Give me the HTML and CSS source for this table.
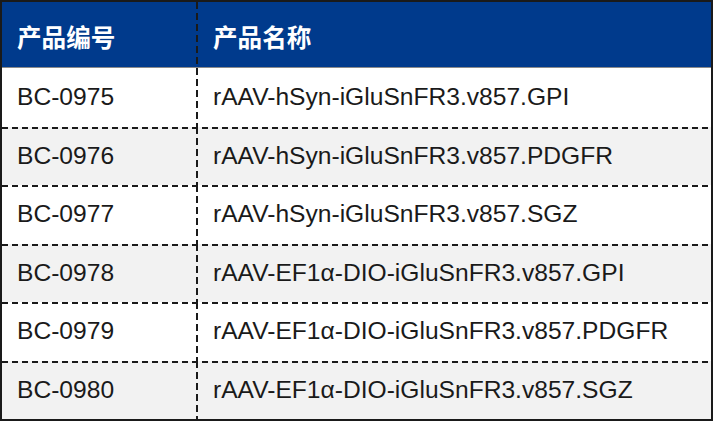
FILE: index.html
```html
<!DOCTYPE html>
<html lang="zh">
<head>
<meta charset="utf-8">
<link rel="stylesheet" href="styles.css">
</head>
<body>
<div class="table">
  <div class="row head">
    <div class="cell c1">产品编号</div>
    <div class="cell c2">产品名称</div>
  </div>
  <div class="row">
    <div class="cell c1">BC-0975</div>
    <div class="cell c2">rAAV-hSyn-iGluSnFR3.v857.GPI</div>
  </div>
  <div class="row alt">
    <div class="cell c1">BC-0976</div>
    <div class="cell c2">rAAV-hSyn-iGluSnFR3.v857.PDGFR</div>
  </div>
  <div class="row">
    <div class="cell c1">BC-0977</div>
    <div class="cell c2">rAAV-hSyn-iGluSnFR3.v857.SGZ</div>
  </div>
  <div class="row alt">
    <div class="cell c1">BC-0978</div>
    <div class="cell c2">rAAV-EF1α-DIO-iGluSnFR3.v857.GPI</div>
  </div>
  <div class="row">
    <div class="cell c1">BC-0979</div>
    <div class="cell c2">rAAV-EF1α-DIO-iGluSnFR3.v857.PDGFR</div>
  </div>
  <div class="row alt">
    <div class="cell c1">BC-0980</div>
    <div class="cell c2">rAAV-EF1α-DIO-iGluSnFR3.v857.SGZ</div>
  </div>
</div>
</body>
</html>
```
FILE: styles.css
```css
html, body {
  margin: 0;
  padding: 0;
  background: #ffffff;
}
.table {
  box-sizing: border-box;
  width: 713px;
  height: 421px;
  border: 2px solid #1a1a1a;
  display: grid;
  grid-template-rows: 66px repeat(6, 1fr);
  font-family: "Liberation Sans", Arial, "Noto Sans CJK SC", sans-serif;
  font-size: 24.6px;
  color: #1a1a1a;
}
.row {
  display: grid;
  grid-template-columns: 194px 1fr;
  background-color: #ffffff;
  background-image: repeating-linear-gradient(to right, #1a1a1a 0 6px, transparent 6px 10px);
  background-size: 100% 2px;
  background-repeat: no-repeat;
  background-position: left top;
}
.row.alt {
  background-color: #f2f2f2;
}
.row.head {
  background: #003a8c;
  border-bottom: 1px solid #8a8a8a;
  color: #ffffff;
  font-family: "Noto Sans CJK SC", sans-serif;
  font-weight: 700;
  font-size: 24.6px;
}
.row:nth-child(2) {
  background-image: none;
}
.cell {
  display: flex;
  align-items: center;
  padding-left: 15px;
  white-space: nowrap;
}
.c2 {
  padding-left: 17px;
  background-image: repeating-linear-gradient(to bottom, #1a1a1a 0 7px, transparent 7px 11px);
  background-size: 2px 100%;
  background-repeat: no-repeat;
  background-position: left top;
}
.head .cell {
  padding-top: 2px;
}
```
